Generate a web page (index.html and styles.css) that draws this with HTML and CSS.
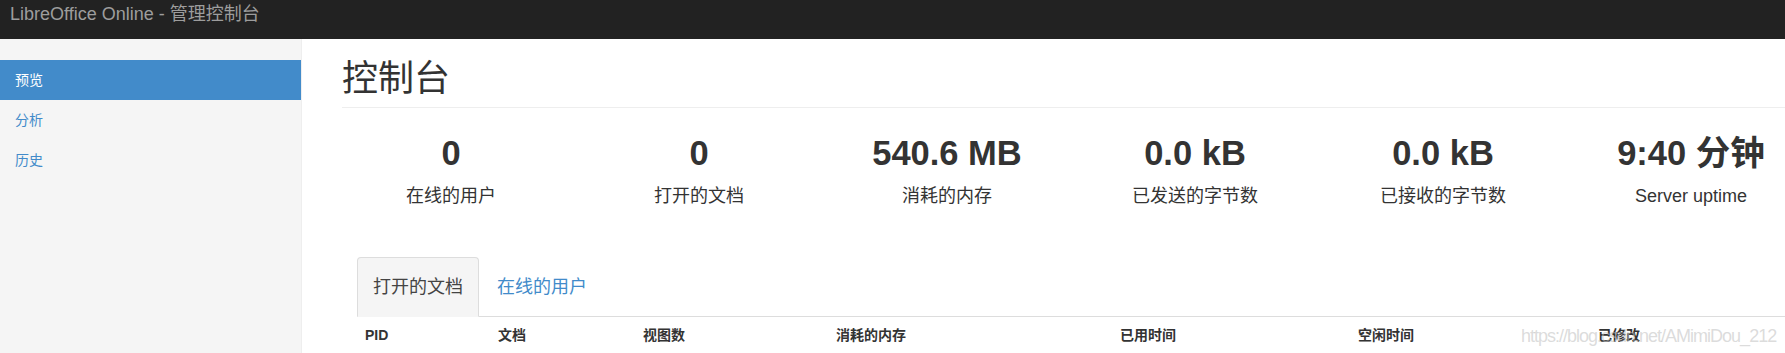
FILE: index.html
```html
<!DOCTYPE html>
<html lang="zh-CN">
<head>
<meta charset="utf-8">
<title>LibreOffice Online - 管理控制台</title>
<link rel="stylesheet" href="styles.css">
</head>
<body>
  <nav class="navbar">
    <span class="brand">LibreOffice Online - 管理控制台</span>
  </nav>
  <div class="layout">
    <aside class="sidebar">
      <ul class="side-nav">
        <li class="side-item active"><a>预览</a></li>
        <li class="side-item"><a>分析</a></li>
        <li class="side-item"><a>历史</a></li>
      </ul>
    </aside>
    <main class="main">
      <h1 class="page-header">控制台</h1>
      <div class="stats">
        <div class="stat"><div class="stat-value">0</div><div class="stat-label">在线的用户</div></div>
        <div class="stat"><div class="stat-value">0</div><div class="stat-label">打开的文档</div></div>
        <div class="stat"><div class="stat-value">540.6 MB</div><div class="stat-label">消耗的内存</div></div>
        <div class="stat"><div class="stat-value">0.0 kB</div><div class="stat-label">已发送的字节数</div></div>
        <div class="stat"><div class="stat-value">0.0 kB</div><div class="stat-label">已接收的字节数</div></div>
        <div class="stat"><div class="stat-value">9:40 分钟</div><div class="stat-label">Server uptime</div></div>
      </div>
      <div class="panel">
        <ul class="tabs">
          <li class="tab active">打开的文档</li>
          <li class="tab">在线的用户</li>
        </ul>
        <table class="doc-table">
          <thead>
            <tr>
              <th class="c-pid">PID</th>
              <th class="c-doc">文档</th>
              <th class="c-views">视图数</th>
              <th class="c-mem">消耗的内存</th>
              <th class="c-elapsed">已用时间</th>
              <th class="c-idle">空闲时间</th>
              <th class="c-mod">已修改</th>
            </tr>
          </thead>
        </table>
      </div>
    </main>
  </div>
  <div class="watermark">https://blog.csdn.net/AMimiDou_212</div>
</body>
</html>
```

FILE: styles.css
```css
html, body {
  margin: 0;
  padding: 0;
  overflow: hidden;
}
body {
  width: 1785px;
  height: 353px;
  font-family: "Liberation Sans", "Noto Sans CJK SC", sans-serif;
  font-size: 14px;
  line-height: 20px;
  color: #333;
  background: #fff;
  position: relative;
  overflow: hidden;
}
.navbar {
  height: 39px;
  background: #222;
  padding: 4px 0 0 10px;
  box-sizing: border-box;
}
.brand {
  display: block;
  font-size: 18px;
  line-height: 20px;
  color: #9d9d9d;
}
.layout {
  display: flex;
  height: 314px;
  overflow: hidden;
}
.sidebar {
  width: 301px;
  flex-shrink: 0;
  background: #f5f5f5;
  border-right: 1px solid #eee;
  padding-top: 21px;
}
.side-nav {
  list-style: none;
  margin: 0;
  padding: 0;
}
.side-item a {
  display: block;
  padding: 10px 15px;
  line-height: 20px;
  color: #428bca;
}
.side-item.active a {
  background: #428bca;
  color: #fff;
}
.main {
  flex-shrink: 0;
  width: 1458px;
  padding: 20px 0 0 40px;
}
.page-header {
  margin: 0 0 20px;
  padding-bottom: 8px;
  font-size: 36px;
  line-height: 40px;
  font-weight: 400;
  color: #333;
  border-bottom: 1px solid #eee;
}
.stats {
  display: flex;
  margin: 0 -15px;
}
.stat {
  width: 248px;
  padding: 0 15px;
  box-sizing: border-box;
  text-align: center;
  flex-shrink: 0;
}
.stat-value {
  margin-top: 6px;
  font-size: 34.5px;
  line-height: 38px;
  font-weight: bold;
  white-space: nowrap;
}
.stat-label {
  margin-top: 11px;
  font-size: 18px;
  line-height: 26px;
  white-space: nowrap;
}
.panel {
  margin: 48px 0 0 15px;
}
.tabs {
  list-style: none;
  margin: 0;
  padding: 0;
  display: flex;
  border-bottom: 1px solid #ddd;
}
.tab {
  margin: 0 2px -1px 0;
  padding: 17px 15px;
  font-size: 18px;
  line-height: 24px;
  border: 1px solid transparent;
  border-radius: 4px 4px 0 0;
  color: #428bca;
}
.tab.active {
  background: #f5f5f5;
  border-color: #ddd #ddd transparent;
  color: #444;
}
.doc-table {
  width: 1428px;
  border-collapse: collapse;
  table-layout: fixed;
}
.doc-table th {
  box-sizing: border-box;
  padding: 8px;
  text-align: left;
  font-size: 14px;
  line-height: 20px;
  font-weight: bold;
  color: #333;
  border-bottom: 2px solid #ddd;
}
.c-pid { width: 133px; }
.c-doc { width: 145px; }
.c-views { width: 193px; }
.c-mem { width: 284px; }
.c-elapsed { width: 238px; }
.c-idle { width: 240px; }
.c-mod { width: 195px; }
.watermark {
  position: absolute;
  left: 1521px;
  top: 325px;
  font-size: 18px;
  line-height: 22px;
  letter-spacing: -1px;
  color: rgba(190, 190, 190, 0.55);
  white-space: nowrap;
}
```
